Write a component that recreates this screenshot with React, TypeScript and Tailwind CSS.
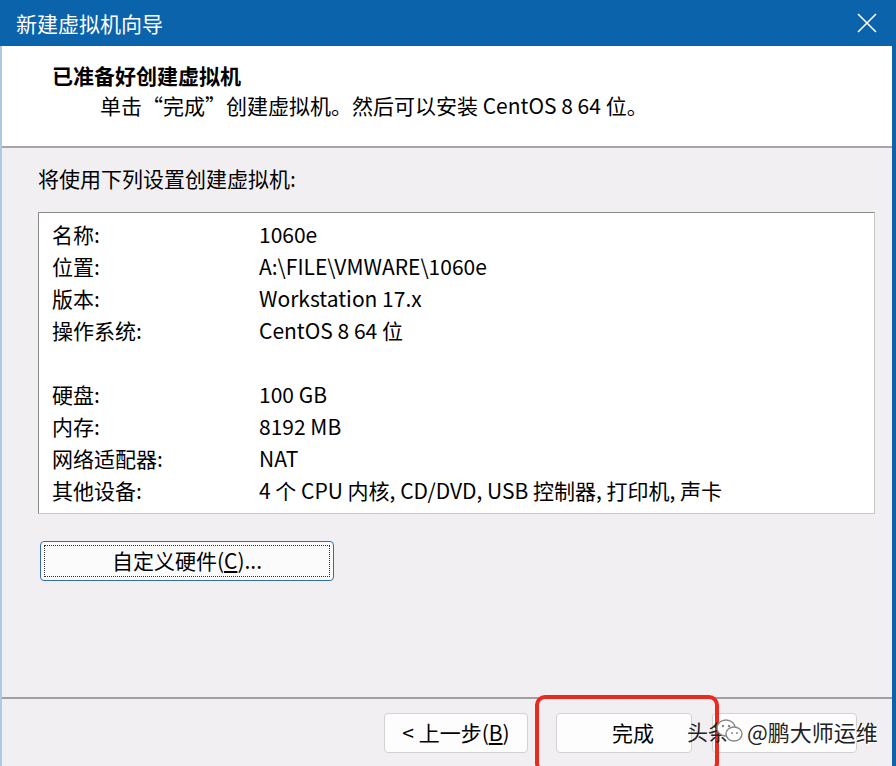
const font = { fontFamily: '"Noto Sans CJK SC", "Noto Sans", sans-serif' };

const rows: [string, string][] = [
  ["名称:", "1060e"],
  ["位置:", "A:\\FILE\\VMWARE\\1060e"],
  ["版本:", "Workstation 17.x"],
  ["操作系统:", "CentOS 8 64 位"],
  ["", ""],
  ["硬盘:", "100 GB"],
  ["内存:", "8192 MB"],
  ["网络适配器:", "NAT"],
  ["其他设备:", "4 个 CPU 内核, CD/DVD, USB 控制器, 打印机, 声卡"],
];

export default function App() {
  return (
    <div
      className="relative flex h-[766px] w-[896px] flex-col overflow-hidden bg-[#f2eff2] text-[21px] text-black"
      style={font}
    >
      {/* title bar */}
      <div className="flex h-[46px] shrink-0 items-center justify-between bg-[#0b63ac] pl-4 pr-[18px]">
        <span className="text-[21px] leading-none text-white">新建虚拟机向导</span>
        <svg width="22" height="22" viewBox="0 0 22 22" className="text-white">
          <path d="M2 2 L20 20 M20 2 L2 20" stroke="currentColor" strokeWidth="1.6" />
        </svg>
      </div>

      <div className="flex flex-1 flex-col border-l-2 border-r-4 border-l-[#a9cbe6] border-r-[#1161a8]">
        {/* header */}
        <div className="h-[102px] shrink-0 border-b-2 border-[#a6a6a6] bg-white pl-[50px] pt-[14px] leading-[30px]">
          <div className="font-bold">已准备好创建虚拟机</div>
          <div className="pl-[48px]">单击“完成”创建虚拟机。然后可以安装 CentOS 8 64 位。</div>
        </div>

        {/* body */}
        <div className="flex flex-1 flex-col pl-[34px] pr-[17px] pt-[15px]">
          <div className="pl-[2px] leading-[30px]">将使用下列设置创建虚拟机:</div>
          <div className="ml-[2px] mt-[19px] h-[302px] border border-b-[#c8c8c8] border-l-[#8a8a8a] border-r-[#c8c8c8] border-t-[#8a8a8a] bg-white pt-[6px]">
            {rows.map(([k, v], i) => (
              <div key={i} className="flex h-[32px] items-center">
                <span className="w-[220px] pl-[13px]">{k}</span>
                <span>{v}</span>
              </div>
            ))}
          </div>
          <div className="ml-[4px] mt-[27px] flex h-[40px] w-[294px] items-center justify-center rounded-[4px] border border-[#2f6fb0] bg-[#fbfbfb] p-[3px]">
            <div className="flex h-full w-full items-center justify-center border border-dotted border-[#333]">
              自定义硬件(<span className="underline">C</span>)...
            </div>
          </div>
          <div className="flex-1" />
        </div>

        {/* footer */}
        <div className="relative flex h-[69px] shrink-0 items-center border-t-2 border-[#a0a0a0] pl-[382px]">
          <div className="flex h-[40px] w-[144px] items-center justify-center rounded-[4px] border border-[#d2d2d2] bg-[#fdfdfd]">
            &lt; 上一步(<span className="underline">B</span>)
          </div>
          <div className="ml-[28px] flex h-[40px] w-[136px] items-center justify-center rounded-[4px] border border-[#d2d2d2] bg-[#fdfdfd] pl-[18px]">
            完成
          </div>
          <div className="ml-[20px] h-[40px] w-[145px] rounded-[4px] border border-[#d2d2d2] bg-[#fdfdfd]" />
        </div>
      </div>

      {/* red highlight */}
      <div className="absolute left-[535px] top-[695px] h-[78px] w-[184px] rounded-[10px] border-[4px] border-[#ea2a1f]" />

      {/* watermark */}
      <div className="absolute left-[687px] top-[717px] flex items-center gap-[2px] leading-none">
        <span className="text-[21px] text-[#222]">头条</span>
        <svg width="30" height="28" viewBox="0 0 30 28" className="-ml-[16px]">
          <ellipse cx="11" cy="11" rx="9" ry="8" fill="white" stroke="#888" strokeWidth="1.4" />
          <ellipse cx="19" cy="17" rx="8" ry="7" fill="white" stroke="#888" strokeWidth="1.4" />
          <circle cx="8" cy="9" r="1.2" fill="#888" />
          <circle cx="14" cy="9" r="1.2" fill="#888" />
          <circle cx="17" cy="16" r="1" fill="#888" />
          <circle cx="22" cy="16" r="1" fill="#888" />
        </svg>
        <span
          className="text-[22px] text-[#222]"
          style={{ textShadow: "0 0 2px #fff, 0 0 2px #fff, 1px 1px 0 #fff, -1px -1px 0 #fff" }}
        >
          @鹏大师运维
        </span>
      </div>
    </div>
  );
}
